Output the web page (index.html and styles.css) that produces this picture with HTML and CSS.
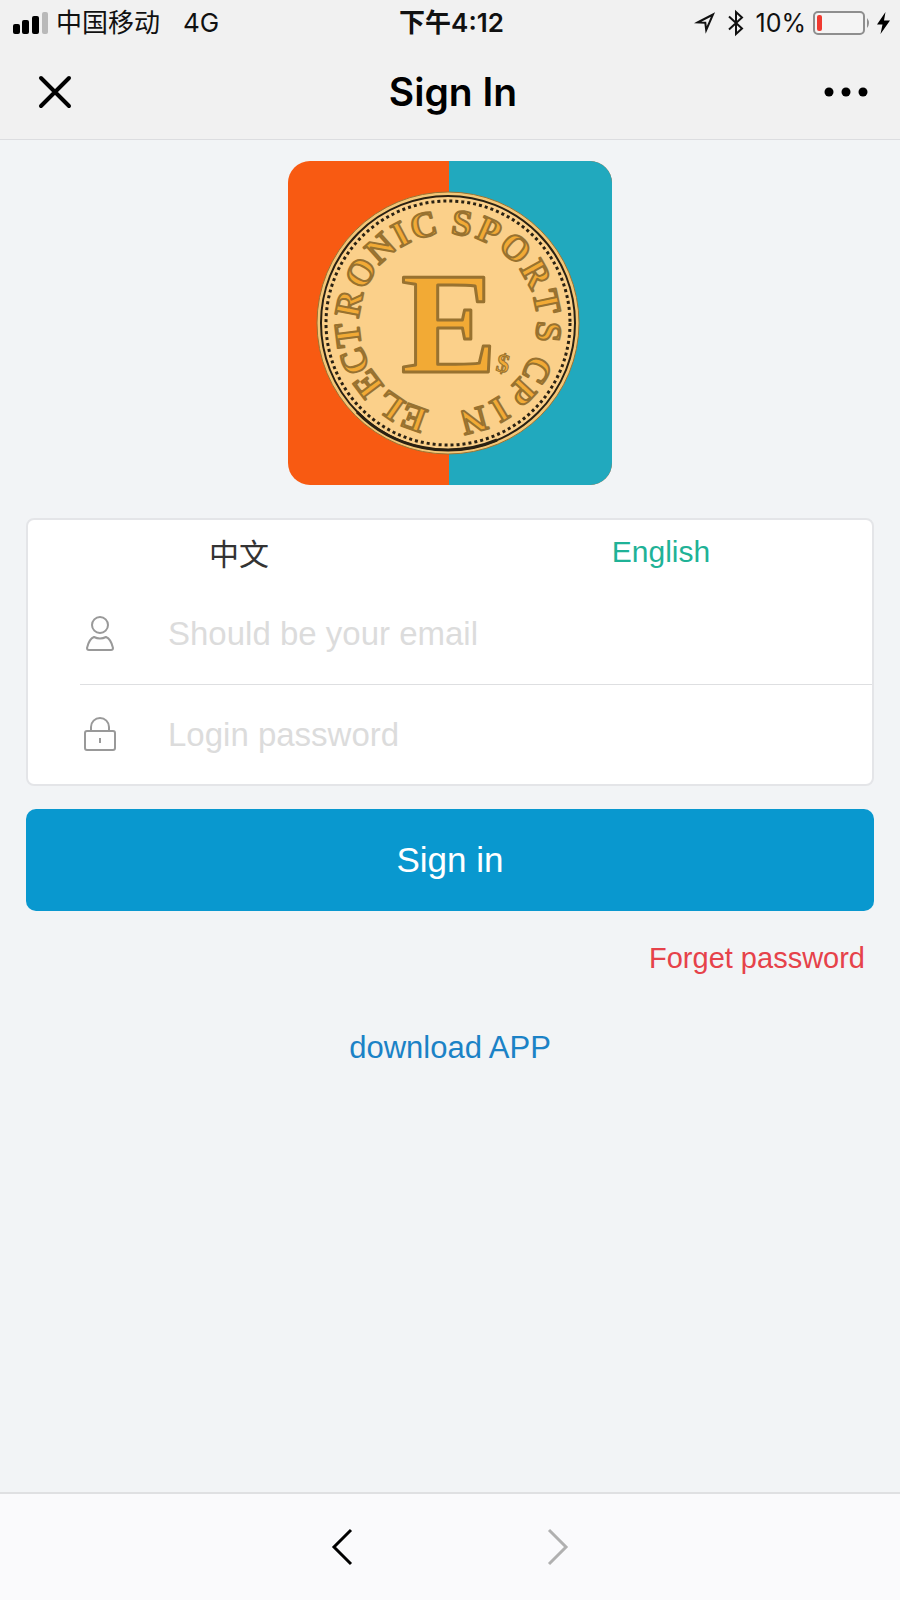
FILE: index.html
```
<!DOCTYPE html>
<html lang="en">
<head>
    <meta charset="UTF-8">
    <meta name="viewport" content="width=device-width, initial-scale=1.0">
    <title>Sign In</title>
    <link rel="stylesheet" href="styles.css">
</head>
<body>
    <header class="header">
        <div class="status-bar">
            <div class="status-left">
                <svg class="signal" width="36" height="24" viewBox="0 0 36 24">
                    <rect x="0" y="13" width="7" height="10" rx="2"/>
                    <rect x="9" y="9" width="7" height="14" rx="2"/>
                    <rect x="19" y="5" width="7" height="18" rx="2"/>
                    <rect x="29" y="1" width="6" height="22" rx="2" fill="#b9b9b9"/>
                </svg>
                <span>中国移动</span>
                <span class="network">4G</span>
            </div>
            <div class="status-time">下午4:12</div>
            <div class="status-right">
                <svg width="22" height="22" viewBox="0 0 22 22" fill="none" stroke="#111" stroke-width="2" stroke-linejoin="miter">
                    <path d="M3.5 10.5 L19 2.5 L12.2 18 L11.3 10.8 Z"/>
                </svg>
                <svg class="bluetooth" width="16" height="28" viewBox="0 0 16 28" fill="none" stroke="#111" stroke-width="2">
                    <path d="M1 7.5 L14 19.5 L8 25 V3 L14 8.5 L1 20.5"/>
                </svg>
                <span>10%</span>
                <svg width="57" height="26" viewBox="0 0 57 26">
                    <rect x="1" y="2" width="50" height="22" rx="4" fill="#f4f4f4" stroke="#8e8e8e" stroke-width="2"/>
                    <rect x="4" y="5" width="5" height="16" rx="2" fill="#f03a30"/>
                    <path d="M54 8 Q58 13 54 18 Z" fill="#8e8e8e"/>
                </svg>
                <svg width="13" height="24" viewBox="0 0 13 24">
                    <path d="M8.5 1 L0 13.5 H5.5 L3.5 23 L13 9.5 H7 Z"/>
                </svg>
            </div>
        </div>
        <div class="nav-bar">
            <button class="icon-btn" type="button" aria-label="Close">
                <svg width="34" height="34" viewBox="0 0 34 34" fill="none" stroke="#000" stroke-width="4" stroke-linecap="round">
                    <path d="M3 3 L31 31 M31 3 L3 31"/>
                </svg>
            </button>
            <h1>Sign In</h1>
            <button class="icon-btn more" type="button" aria-label="More">
                <svg width="44" height="10" viewBox="0 0 44 10">
                    <circle cx="5" cy="5" r="4.5"/>
                    <circle cx="22" cy="5" r="4.5"/>
                    <circle cx="39" cy="5" r="4.5"/>
                </svg>
            </button>
        </div>
    </header>

    <main class="main">
        <svg class="logo" width="324" height="324" viewBox="0 0 324 324">
            <rect width="324" height="324" fill="#f85a12"/>
            <rect x="161" width="163" height="324" fill="#21a9be"/>
            <!-- coin -->
            <circle cx="160" cy="162" r="131" fill="#f3c677" stroke="#9a7434" stroke-width="1"/>
            <circle cx="160" cy="162" r="127" fill="#fbd08a" stroke="#2a2112" stroke-width="2"/>
            <circle cx="160" cy="162" r="122" fill="none" stroke="#2a2112" stroke-width="3" stroke-dasharray="3 3"/>
            <path d="M69 251 A127 127 0 0 0 209 279" fill="none" stroke="#2a2112" stroke-width="3"/>
            <g class="ring">
                <text x="160" y="73" transform="rotate(200 160 162)">E</text>
                <text x="160" y="73" transform="rotate(215 160 162)">L</text>
                <text x="160" y="73" transform="rotate(233 160 162)">E</text>
                <text x="160" y="73" transform="rotate(248 160 162)">C</text>
                <text x="160" y="73" transform="rotate(263 160 162)">T</text>
                <text x="160" y="73" transform="rotate(281 160 162)">R</text>
                <text x="160" y="73" transform="rotate(300 160 162)">O</text>
                <text x="160" y="73" transform="rotate(318 160 162)">N</text>
                <text x="160" y="73" transform="rotate(332 160 162)">I</text>
                <text x="160" y="73" transform="rotate(346 160 162)">C</text>
                <text x="160" y="73" transform="rotate(8 160 162)">S</text>
                <text x="160" y="73" transform="rotate(24 160 162)">P</text>
                <text x="160" y="73" transform="rotate(42 160 162)">O</text>
                <text x="160" y="73" transform="rotate(61 160 162)">R</text>
                <text x="160" y="73" transform="rotate(78 160 162)">T</text>
                <text x="160" y="73" transform="rotate(95 160 162)">S</text>
                <text x="160" y="73" transform="rotate(118 160 162)">C</text>
                <text x="160" y="73" transform="rotate(133 160 162)">P</text>
                <text x="160" y="73" transform="rotate(149 160 162)">I</text>
                <text x="160" y="73" transform="rotate(165 160 162)">N</text>
            </g>
            <text class="coin-letter" x="161" y="211">E</text>
            <text class="coin-dollar" x="215" y="211" transform="rotate(12 215 203)">$</text>
        </svg>

        <form class="login-form">
            <div class="card">
                <div class="languages">
                    <button class="chinese" type="button" lang="zh">中文</button>
                    <button class="active" type="button">English</button>
                </div>
                <div class="field">
                    <label for="email" aria-label="Email">
                        <svg width="40" height="40" viewBox="0 0 40 40">
                            <circle cx="20" cy="11" r="8"/>
                            <path d="M14 23 Q20 26 26 23 Q31 25 33 34 Q33 36 31 36 H9 Q7 36 7 34 Q9 25 14 23 Z"/>
                        </svg>
                    </label>
                    <input type="email" id="email" placeholder="Should be your email">
                </div>
                <div class="field">
                    <label for="password" aria-label="Password">
                        <svg width="40" height="40" viewBox="0 0 40 40">
                            <path d="M11 16 V12 A9 9 0 0 1 29 12 V16"/>
                            <rect x="5" y="16" width="30" height="19" rx="2"/>
                            <path d="M20 23 V28"/>
                        </svg>
                    </label>
                    <input type="password" id="password" placeholder="Login password">
                </div>
            </div>
            <button class="submit" type="submit">Sign in</button>
        </form>
        <a class="forget" href="#">Forget password</a>
        <a class="download" href="#">download APP</a>
    </main>

    <footer class="toolbar">
        <button class="icon-btn" type="button" aria-label="Back">
            <svg width="22" height="40" viewBox="0 0 22 40" fill="none" stroke="#000" stroke-width="3">
                <path d="M20 3 L3 20 L20 37"/>
            </svg>
        </button>
        <button class="icon-btn" type="button" aria-label="Forward" disabled>
            <svg width="22" height="40" viewBox="0 0 22 40" fill="none" stroke="#b0b0b0" stroke-width="3">
                <path d="M2 3 L19 20 L2 37"/>
            </svg>
        </button>
    </footer>
</body>
</html>
```

FILE: styles.css
```
* {
    box-sizing: border-box;
}
body {
    margin: 0;
    min-height: 100vh;
    display: flex;
    flex-direction: column;
    font-family: "Liberation Sans", "Noto Sans CJK SC", sans-serif;
    background: #f2f4f6;
    color: #000;
}
button, input {
    font-family: inherit;
    border: none;
    background: none;
    padding: 0;
}
button {
    cursor: pointer;
}
svg {
    display: block;
    flex-shrink: 0;
}
a {
    text-decoration: none;
}

/* header */
.header {
    background: #f1f1f1;
    border-bottom: 1px solid #dcdde0;
}
.status-bar {
    display: grid;
    grid-template-columns: 1fr auto 1fr;
    align-items: center;
    height: 46px;
    padding: 0 10px 0 13px;
    font-family: Inter, "Noto Sans CJK SC", sans-serif;
    font-size: 26px;
    line-height: 32px;
    color: #111;
}
.status-left, .status-right {
    display: flex;
    align-items: center;
    gap: 7px;
}
.status-right {
    justify-content: flex-end;
}
.network {
    margin-left: 16px;
}
.bluetooth {
    margin: 0 5px;
}
.status-right span {
    font-size: 25px;
}
.status-time {
    font-weight: 600;
}
.nav-bar {
    display: grid;
    grid-template-columns: 1fr auto 1fr;
    align-items: center;
    height: 93px;
    padding: 0 32px 2px 38px;
}
.nav-bar h1 {
    margin: 0;
    font-family: Inter, sans-serif;
    font-size: 39px;
    font-weight: 600;
}
.icon-btn {
    justify-self: start;
}
.more {
    justify-self: end;
}

/* content */
.main {
    flex: 1;
    display: flex;
    flex-direction: column;
    align-items: center;
    padding: 21px 26px;
}
.logo {
    border-radius: 22px;
}
.logo text {
    font-family: "Liberation Serif", serif;
    font-weight: bold;
    text-anchor: middle;
    fill: #f2aa35;
    stroke: #987230;
    stroke-width: 2px;
    stroke-linejoin: round;
}
.ring {
    font-size: 36px;
}
.logo .coin-letter {
    font-size: 144px;
    stroke-width: 3px;
}
.logo .coin-dollar {
    font-size: 26px;
    stroke-width: 1px;
}
.login-form {
    width: 100%;
    margin-top: 33px;
}
.card {
    background: #fff;
    border: 2px solid #e4e5e8;
    border-radius: 8px;
}
.languages {
    display: grid;
    grid-template-columns: 1fr 1fr;
    height: 64px;
}
.languages button {
    font-size: 30px;
    color: #333;
}
.languages .chinese {
    font-family: "Noto Sans CJK SC", sans-serif;
    line-height: 30px;
}
.languages .active {
    color: #1fb297;
}
.field {
    display: flex;
    align-items: center;
    gap: 48px;
    height: 100px;
    margin-left: 52px;
}
.field + .field {
    border-top: 1px solid #dedfe1;
}
.field svg {
    fill: none;
    stroke: #999;
    stroke-width: 2px;
}
.field input {
    flex: 1;
    min-width: 0;
    height: 60px;
    font-size: 33px;
    color: #333;
    outline: none;
}
.field input::placeholder {
    color: #dcdcdc;
}
.submit {
    width: 100%;
    height: 102px;
    margin-top: 23px;
    border-radius: 10px;
    background: #0998cf;
    color: #fff;
    font-size: 35px;
}
.forget {
    align-self: flex-end;
    margin: 30px 9px 0 0;
    font-size: 29px;
    line-height: 34px;
    color: #e6424a;
}
.download {
    margin-top: 56px;
    font-size: 31px;
    line-height: 34px;
    color: #1b82c6;
}

/* bottom bar */
.toolbar {
    display: flex;
    justify-content: center;
    align-items: center;
    gap: 194px;
    height: 108px;
    background: #fafafc;
    border-top: 2px solid #dfe0e2;
}
```
